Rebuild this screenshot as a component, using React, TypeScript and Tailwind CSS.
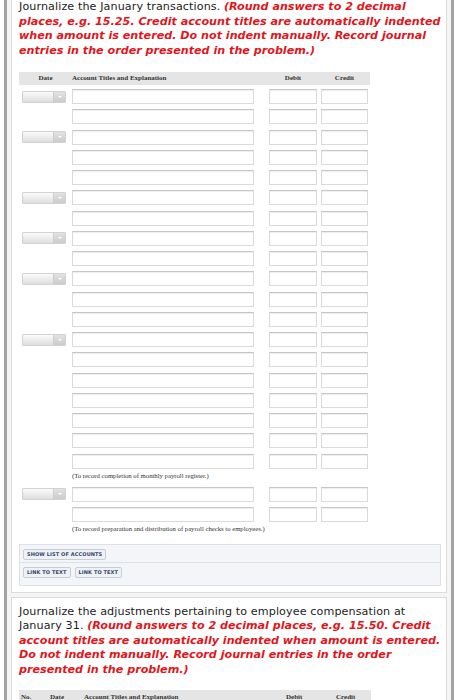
import React from "react";

// true = row carries a date picker
const payrollRows = [
  true, false, true, false, false, true, false, true, false, true,
  false, false, true, false, false, false, false, false, false,
];
const checkRows = [true, false];

const sans = "font-['DejaVu_Sans',Verdana,sans-serif]";
const serif = "font-['Liberation_Serif','Times_New_Roman',serif]";
const hint = "font-bold italic text-[#e0161c]";

const DateSelect = () => (
  <div className="ml-[3px] flex h-[12px] w-[44px] overflow-hidden rounded-[1px] border border-[#d2d2d2]">
    <div className="flex-1 bg-gradient-to-b from-[#fbfbfb] to-[#dedede]" />
    <div className="flex w-[12px] items-center justify-center border-l border-[#cfcfcf] bg-gradient-to-b from-[#e2e2e2] to-[#cbcbcb]">
      <span className="h-0 w-0 border-x-[2px] border-t-[2px] border-x-transparent border-t-white" />
    </div>
  </div>
);

const Field = ({ className }: { className: string }) => (
  <div
    className={
      "h-[15px] border border-[#dadada] border-t-[#c6c6c6] bg-white shadow-[inset_0_1px_1px_rgba(0,0,0,0.07)] " +
      className
    }
  />
);

const EntryRow = ({ dated }: { dated: boolean }) => (
  <div className="flex items-center">
    <div className="w-[53px]">{dated && <DateSelect />}</div>
    <Field className="w-[182px]" />
    <Field className="ml-[15px] w-[48px]" />
    <Field className="ml-[4px] w-[47px]" />
  </div>
);

const Note = ({ children }: { children: React.ReactNode }) => (
  <p className={`${serif} ml-[53px] text-[6.7px] leading-[12px] text-[#333]`}>{children}</p>
);

const ToolButton = ({ label }: { label: string }) => (
  <button
    className={`${sans} h-[11px] rounded-[2px] border border-[#c9ced6] bg-[#eef1f5] px-[3px] text-[5px] font-bold leading-[9px] tracking-[0.1px] text-[#34466b]`}
  >
    {label}
  </button>
);

const App = () => {
  return (
    <div className="min-h-screen bg-white">
      <div className="ml-[4px] mr-[1px] min-h-[700px] border-x-[3px] border-[#a3a3a3] bg-[#f5f5f5] px-[4px]">
        {/* January transactions */}
        <div className="border-x border-b border-[#dcdcdc] bg-white pb-[6px] pl-[7px] pr-[2px]">
          <p className={`${sans} text-[11.15px] leading-[14.5px] text-[#1c1c1c]`}>
            <span className="tracking-[0.1px]">Journalize the January transactions.</span>{" "}
            <span className={hint}>
              (Round answers to 2 decimal
              <br />
              places, e.g. 15.25. Credit account titles are automatically indented
              <br />
              when amount is entered. Do not indent manually. Record journal
              <br />
              entries in the order presented in the problem.)
            </span>
          </p>

          <div
            className={`${serif} mt-[14px] flex h-[13px] w-[351px] items-center bg-[#e5e5e5] text-[7px] font-bold text-[#333]`}
          >
            <div className="w-[53px] text-center">Date</div>
            <div className="w-[197px]">Account Titles and Explanation</div>
            <div className="w-[48px] text-center">Debit</div>
            <div className="ml-[4px] w-[47px] text-center">Credit</div>
          </div>

          <div className="mt-[4px] flex flex-col gap-[5.25px]">
            {payrollRows.map((dated, i) => (
              <EntryRow key={i} dated={dated} />
            ))}
          </div>
          <div className="mt-[1px]">
            <Note>(To record completion of monthly payroll register.)</Note>
          </div>

          <div className="mt-[5px] flex flex-col gap-[5.25px]">
            {checkRows.map((dated, i) => (
              <EntryRow key={i} dated={dated} />
            ))}
          </div>
          <div className="mt-[1.5px]">
            <Note>(To record preparation and distribution of payroll checks to employees.)</Note>
          </div>

          <div className="mt-[9px] w-[422px] border border-[#dde1e7] bg-[#f3f5f8]">
            <div className="flex h-[18px] items-start border-b border-[#dde1e7] pl-[3px] pt-[4px]">
              <ToolButton label="SHOW LIST OF ACCOUNTS" />
            </div>
            <div className="flex gap-[4px] pb-[7px] pl-[3px] pt-[4px]">
              <ToolButton label="LINK TO TEXT" />
              <ToolButton label="LINK TO TEXT" />
            </div>
          </div>
        </div>

        {/* Adjustments at January 31 */}
        <div className="mt-[4px] border border-[#dcdcdc] bg-white pb-[6px] pl-[7px] pr-[2px] pt-[6.5px]">
          <p className={`${sans} text-[11.15px] leading-[14.5px] text-[#1c1c1c]`}>
            <span className="tracking-[0.1px]">
              Journalize the adjustments pertaining to employee compensation at
              <br />
              January 31.
            </span>{" "}
            <span className={hint}>
              (Round answers to 2 decimal places, e.g. 15.50. Credit
              <br />
              account titles are automatically indented when amount is entered.
              <br />
              Do not indent manually. Record journal entries in the order
              <br />
              presented in the problem.)
            </span>
          </p>

          <div
            className={`${serif} mt-[13px] flex h-[13px] w-[352px] items-center bg-[#e5e5e5] text-[7px] font-bold text-[#333]`}
          >
            <div className="w-[31px] pl-[2px]">No.</div>
            <div className="w-[34px]">Date</div>
            <div className="w-[202px]">Account Titles and Explanation</div>
            <div className="w-[50px]">Debit</div>
            <div>Credit</div>
          </div>
        </div>
      </div>
    </div>
  );
};

export default App;
